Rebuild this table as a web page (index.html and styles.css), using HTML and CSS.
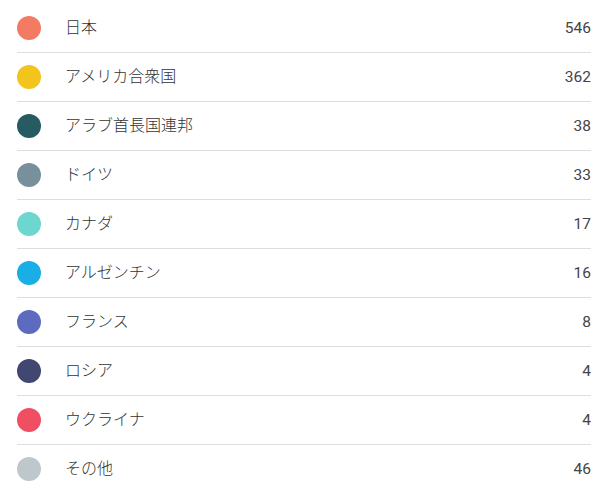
FILE: index.html
```html
<!DOCTYPE html>
<html lang="ja">
<head>
<meta charset="utf-8">
<link rel="stylesheet" href="styles.css">
</head>
<body>
<ul class="legend">
  <li class="row"><span class="dot c1"></span><span class="name">日本</span><span class="count">546</span></li>
  <li class="row"><span class="dot c2"></span><span class="name">アメリカ合衆国</span><span class="count">362</span></li>
  <li class="row"><span class="dot c3"></span><span class="name">アラブ首長国連邦</span><span class="count">38</span></li>
  <li class="row"><span class="dot c4"></span><span class="name">ドイツ</span><span class="count">33</span></li>
  <li class="row"><span class="dot c5"></span><span class="name">カナダ</span><span class="count">17</span></li>
  <li class="row"><span class="dot c6"></span><span class="name">アルゼンチン</span><span class="count">16</span></li>
  <li class="row"><span class="dot c7"></span><span class="name">フランス</span><span class="count">8</span></li>
  <li class="row"><span class="dot c8"></span><span class="name">ロシア</span><span class="count">4</span></li>
  <li class="row"><span class="dot c9"></span><span class="name">ウクライナ</span><span class="count">4</span></li>
  <li class="row"><span class="dot c10"></span><span class="name">その他</span><span class="count">46</span></li>
</ul>
</body>
</html>
```

FILE: styles.css
```css
html, body {
  margin: 0;
  padding: 0;
  background: #ffffff;
}
body {
  font-family: "Noto Sans CJK JP", sans-serif;
  font-size: 16px;
  color: #333333;
}
.legend {
  list-style: none;
  margin: 0;
  padding: 4px 20px 0 17px;
}
.row {
  display: flex;
  align-items: center;
  height: 48px;
  border-bottom: 1px solid #dedede;
}
.row:last-child {
  border-bottom: none;
}
.dot {
  width: 24px;
  height: 24px;
  border-radius: 50%;
  flex: none;
  margin-right: 24px;
}
.name {
  flex: 1;
  line-height: 1;
  font-weight: 300;
  margin-bottom: 4px;
}
.count {
  text-align: right;
  line-height: 1;
  font-family: Roboto, sans-serif;
  font-size: 15.5px;
  font-weight: 400;
  color: #444444;
  margin-top: 1px;
}
.c1 { background: #f47b63; }
.c2 { background: #f2c41c; }
.c3 { background: #265b61; }
.c4 { background: #78909c; }
.c5 { background: #6cd6cf; }
.c6 { background: #1aaee6; }
.c7 { background: #5c6bc0; }
.c8 { background: #404770; }
.c9 { background: #f04e62; }
.c10 { background: #bec7cc; }
```
